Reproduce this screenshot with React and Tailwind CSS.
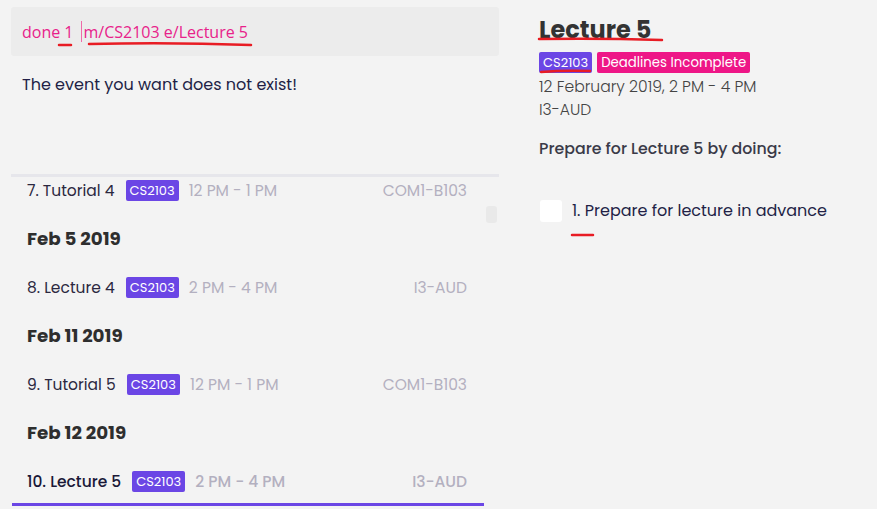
import React from "react";

const FONT = "font-['Poppins','Lato','Open_Sans',sans-serif]";

const rows = [
  { type: "item", name: "7. Tutorial 4", time: "12 PM - 1 PM", venue: "COM1-B103" },
  { type: "date", label: "Feb 5 2019" },
  { type: "item", name: "8. Lecture 4", time: "2 PM - 4 PM", venue: "I3-AUD" },
  { type: "date", label: "Feb 11 2019" },
  { type: "item", name: "9. Tutorial 5", time: "12 PM - 1 PM", venue: "COM1-B103" },
  { type: "date", label: "Feb 12 2019" },
  { type: "item", name: "10. Lecture 5", time: "2 PM - 4 PM", venue: "I3-AUD", selected: true },
];

const Badge = ({ children, color = "bg-[#6b46e5]", size = "text-[13px]" }) => (
  <span className={`${color} ${size} text-white font-normal leading-[21px] h-[21px] px-[4px] rounded-[2px]`}>
    {children}
  </span>
);

const Row = ({ row }) => {
  if (row.type === "date") {
    return (
      <div className="h-[48.5px] flex items-center pl-[15px] text-[18.3px] font-bold text-[#2e2e2e]">
        {row.label}
      </div>
    );
  }
  return (
    <div
      className={`h-[48.5px] flex items-center pl-[15px] pr-[17px] text-[15.5px] ${
        row.selected ? "shadow-[inset_0_-3px_0_#6b46e5] font-medium text-[#1a1838]" : "text-[#2b2840]"
      }`}
    >
      <span className="mr-[11px]">{row.name}</span>
      <Badge>CS2103</Badge>
      <span className="ml-[10px] text-[#b3b0c0]">{row.time}</span>
      <span className="ml-auto text-[#b3b0c0]">{row.venue}</span>
    </div>
  );
};

export default function App() {
  return (
    <div className={`${FONT} relative w-[877px] h-[509px] bg-[#f3f3f3] flex overflow-hidden`}>
      {/* left column */}
      <div className="w-[488px] ml-[11px] flex flex-col">
        <div className="mt-[7px] h-[49px] bg-[#ececec] rounded-[3px] flex items-center px-[11px] font-['Open_Sans',sans-serif] text-[16px] text-[#e8228a]">
          <span>done 1</span>
          <span className="w-[1px] h-[21px] bg-[#ef6aa8] ml-[7px] mr-[2px]" />
          <span>m/CS2103 e/Lecture 5</span>
        </div>
        <div className="h-[118px] px-[11px] pt-[17px] text-[16px] text-[#221f46]">
          The event you want does not exist!
        </div>
        <div className="h-[3px] bg-[#e6e6eb]" />
        <div className="relative flex-1 overflow-hidden">
          <div className="-mt-[11px] w-[472px] ml-[1px]">
            {rows.map((r, i) => (
              <Row key={i} row={r} />
            ))}
          </div>
          <div className="absolute left-[475px] top-[29px] w-[11px] h-[17px] rounded-[3px] bg-[#e9e9e9]" />
        </div>
      </div>

      {/* right column */}
      <div className="ml-[40px] pt-[14px] flex flex-col">
        <div className="text-[24px] font-bold text-[#333] leading-[32px]">Lecture 5</div>
        <div className="flex gap-[5px] mt-[6px]">
          <Badge>CS2103</Badge>
          <Badge color="bg-[#ee1687]" size="text-[13.3px]">Deadlines Incomplete</Badge>
        </div>
        <div className="mt-[2px] text-[15.6px] font-light text-[#444] leading-[23px]">12 February 2019, 2 PM - 4 PM</div>
        <div className="text-[15.6px] font-light text-[#444] leading-[23px]">I3-AUD</div>
        <div className="mt-[16px] text-[15.8px] font-medium text-[#3a3a48] leading-[23px]">
          Prepare for Lecture 5 by doing:
        </div>
        <div className="mt-[39px] flex items-center">
          <div className="w-[22px] h-[22px] bg-white rounded-[3px] ml-[1px]" />
          <span className="ml-[10px] text-[16px] text-[#221f46]">1. Prepare for lecture in advance</span>
        </div>
      </div>

      {/* red annotation marks */}
      <svg className="absolute inset-0 pointer-events-none" width="877" height="509">
        <g stroke="#e81c24" strokeWidth="2.5" strokeLinecap="round" fill="none">
          <path d="M59 45 L71 45" />
          <path d="M89 44 Q170 42 251 45" />
          <path d="M539 39 Q600 38 662 40" />
          <path d="M541 72 Q565 70 590 71" />
          <path d="M572 235 L593 235" />
        </g>
      </svg>
    </div>
  );
}
